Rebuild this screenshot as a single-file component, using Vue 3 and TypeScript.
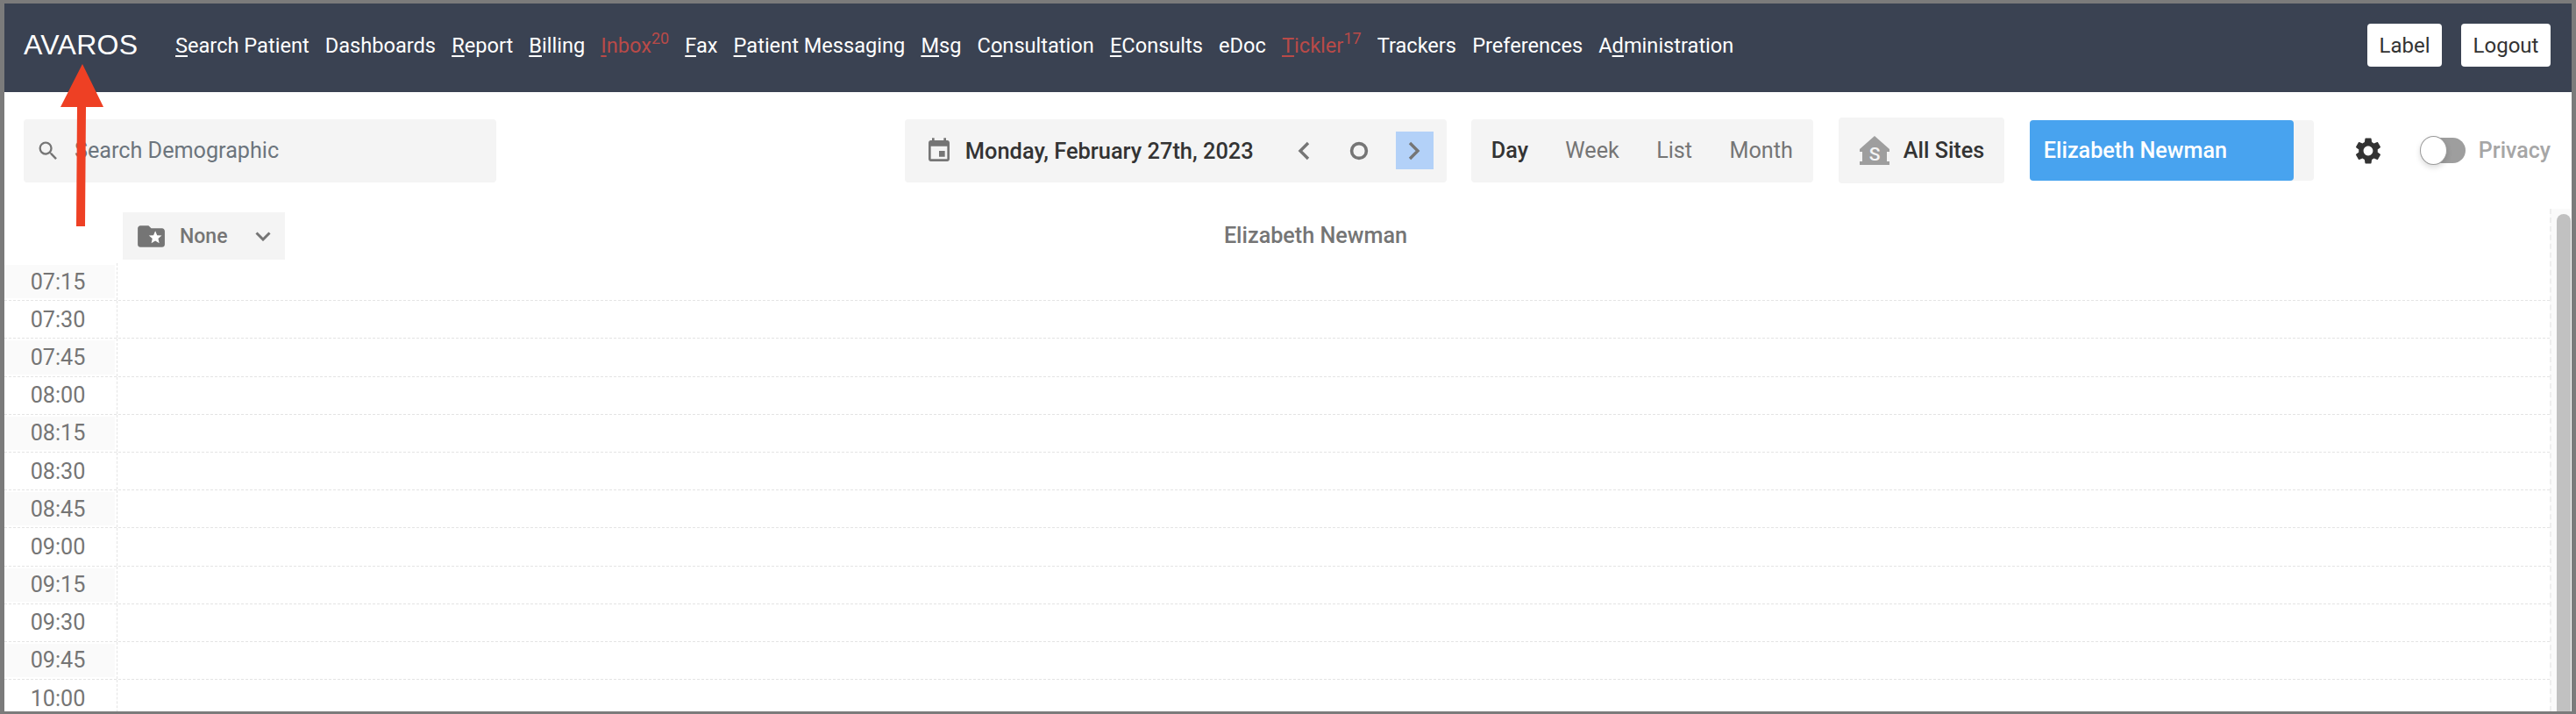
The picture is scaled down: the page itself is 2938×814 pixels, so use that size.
<script setup lang="ts">
interface NavItem {
  pre?: string
  key?: string
  post?: string
  alert?: boolean
  sup?: string
}

const navItems: NavItem[] = [
  { key: 'S', post: 'earch Patient' },
  { post: 'Dashboards' },
  { key: 'R', post: 'eport' },
  { key: 'B', post: 'illing' },
  { key: 'I', post: 'nbox', alert: true, sup: '20' },
  { key: 'F', post: 'ax' },
  { key: 'P', post: 'atient Messaging' },
  { key: 'M', post: 'sg' },
  { pre: 'C', key: 'o', post: 'nsultation' },
  { key: 'E', post: 'Consults' },
  { post: 'eDoc' },
  { key: 'T', post: 'ickler', alert: true, sup: '17' },
  { post: 'Trackers' },
  { post: 'Preferences' },
  { pre: 'A', key: 'd', post: 'ministration' },
]

const views = ['Day', 'Week', 'List', 'Month']

const times = [
  '07:15', '07:30', '07:45', '08:00', '08:15', '08:30',
  '08:45', '09:00', '09:15', '09:30', '09:45', '10:00',
]
</script>

<template>
  <div class="frame">
    <header class="nav">
      <div class="logo">AVAROS</div>
      <nav class="links">
        <a v-for="item in navItems" :key="(item.pre ?? '') + (item.key ?? '') + item.post" class="link" :class="{ alert: item.alert }">{{ item.pre }}<u v-if="item.key">{{ item.key }}</u>{{ item.post }}<sup v-if="item.sup">{{ item.sup }}</sup></a>
      </nav>
      <div class="nav-actions">
        <button class="nav-btn label-btn">Label</button>
        <button class="nav-btn logout-btn">Logout</button>
      </div>
    </header>

    <section class="toolbar">
      <div class="group search">
        <svg class="search-icon" viewBox="0 0 24 24" width="28" height="28">
          <path fill="#757575" d="M15.5 14h-.79l-.28-.27A6.47 6.47 0 0 0 16 9.5 6.5 6.5 0 1 0 9.5 16c1.61 0 3.09-.59 4.23-1.57l.27.28v.79l5 4.99L20.49 19l-4.99-5zm-6 0C7.01 14 5 11.99 5 9.5S7.01 5 9.5 5 14 7.01 14 9.5 11.99 14 9.5 14z" />
        </svg>
        <span class="placeholder">Search Demographic</span>
      </div>

      <div class="group date">
        <svg viewBox="0 0 24 24" width="32" height="32">
          <path fill="#757575" d="M17 12h-5v5h5v-5zM16 1v2H8V1H6v2H5c-1.11 0-1.99.9-1.99 2L3 19c0 1.1.89 2 2 2h14c1.1 0 2-.9 2-2V5c0-1.1-.9-2-2-2h-1V1h-2zm3 18H5V8h14v11z" />
        </svg>
        <span class="date-text">Monday, February 27th, 2023</span>
        <div class="date-nav">
          <span class="date-btn">
            <svg viewBox="0 0 16 24" width="16" height="24"><path d="M13 3 4 12l9 9" fill="none" stroke="#757575" stroke-width="3.4" /></svg>
          </span>
          <span class="date-btn">
            <svg viewBox="0 0 22 22" width="22" height="22"><circle cx="11" cy="11" r="8.4" fill="none" stroke="#757575" stroke-width="3.6" /></svg>
          </span>
          <span class="date-btn active">
            <svg viewBox="0 0 16 24" width="16" height="24"><path d="m3 3 9 9-9 9" fill="none" stroke="#757575" stroke-width="3.4" /></svg>
          </span>
        </div>
      </div>

      <div class="group view">
        <span v-for="(v, i) in views" :key="v" class="view-item" :class="{ current: i === 0 }">{{ v }}</span>
      </div>

      <div class="group sites">
        <svg viewBox="0 0 34 33" width="34" height="33">
          <path fill="#9e9e9e" d="M17 0 34 15v3h-3v11h3v4H0v-4h3V18H0v-3z" />
          <text x="17" y="28" text-anchor="middle" class="site-s">S</text>
        </svg>
        <span class="sites-text">All Sites</span>
      </div>

      <div class="provider">
        <div class="provider-value">Elizabeth Newman</div>
      </div>

      <svg class="gear" viewBox="0 0 24 24" width="36" height="36">
        <path fill="#333" d="M19.14 12.94c.04-.3.06-.61.06-.94 0-.32-.02-.64-.07-.94l2.03-1.58c.18-.14.23-.41.12-.61l-1.92-3.32c-.12-.22-.37-.29-.59-.22l-2.39.96c-.5-.38-1.03-.7-1.62-.94l-.36-2.54c-.04-.24-.24-.41-.48-.41h-3.84c-.24 0-.43.17-.47.41l-.36 2.54c-.59.24-1.13.57-1.62.94l-2.39-.96c-.22-.08-.47 0-.59.22L2.74 8.87c-.12.21-.08.47.12.61l2.03 1.58c-.05.3-.09.63-.09.94s.02.64.07.94l-2.03 1.58c-.18.14-.23.41-.12.61l1.92 3.32c.12.22.37.29.59.22l2.39-.96c.5.38 1.03.7 1.62.94l.36 2.54c.05.24.24.41.48.41h3.84c.24 0 .44-.17.47-.41l.36-2.54c.59-.24 1.13-.56 1.62-.94l2.39.96c.22.08.47 0 .59-.22l1.92-3.32c.12-.22.07-.47-.12-.61l-2.01-1.58zM12 15.6c-1.98 0-3.6-1.62-3.6-3.6s1.62-3.6 3.6-3.6 3.6 1.62 3.6 3.6-1.62 3.6-3.6 3.6z" />
      </svg>

      <div class="toggle"><span class="knob"></span></div>
      <span class="privacy">Privacy</span>
    </section>

    <section class="calendar">
      <div class="grid">
        <div class="grid-head">
          <div class="schedule">
            <svg viewBox="0 0 24 24" width="37" height="37">
              <path fill="#757575" d="M20 6h-8l-2-2H4c-1.1 0-1.99.9-1.99 2L2 18c0 1.1.9 2 2 2h16c1.1 0 2-.9 2-2V8c0-1.1-.9-2-2-2z" />
              <path fill="#fff" d="M17.94 17 15 15.28 12.06 17l.78-3.33-2.59-2.24 3.41-.29L15 8l1.34 3.14 3.41.29-2.59 2.24z" />
            </svg>
            <span class="schedule-text">None</span>
            <svg class="schedule-caret" viewBox="0 0 18 11" width="18" height="11">
              <path d="m1.5 1.5 7.5 7.5 7.5-7.5" fill="none" stroke="#757575" stroke-width="3" />
            </svg>
          </div>
          <div class="column-title">Elizabeth Newman</div>
        </div>
        <div v-for="(t, i) in times" :key="t" class="row">
          <div class="time" :class="{ shaded: i % 2 === 0 }">{{ t }}</div>
          <div class="slot"></div>
        </div>
      </div>
      <div class="scroll-track"><div class="scroll-thumb"></div></div>
    </section>

    <svg class="annotation" viewBox="0 0 49 185" width="49" height="185">
      <path fill="#ee4024" d="M25 0 49 49H29L28 185H18L19 49H0z" />
    </svg>
  </div>
</template>

<style scoped>
.frame {
  position: relative;
  box-sizing: border-box;
  width: 2938px;
  height: 814px;
  border-style: solid;
  border-color: #7b7b7b;
  border-width: 4px 5px 3px;
  background: #fff;
  overflow: hidden;
  display: flex;
  flex-direction: column;
  font-family: Roboto, "Liberation Sans", sans-serif;
  font-size: 25.2px;
  color: #333;
}

.nav {
  flex: none;
  height: 101px;
  box-sizing: border-box;
  padding: 0 24px 6px 22px;
  display: flex;
  align-items: center;
  background: #3a4252;
}

.logo {
  font-family: "Liberation Sans", Arial, sans-serif;
  font-size: 32px;
  letter-spacing: 0.3px;
  color: #fff;
  width: 173px;
  flex: none;
}

.links {
  display: flex;
  gap: 18.1px;
  flex: 1;
  font-size: 23.6px;
}

.link {
  color: #fff;
  white-space: nowrap;
  line-height: 30px;
}

.link u {
  text-underline-offset: 3px;
  text-decoration-thickness: 2px;
}

.link.alert {
  color: #b94a48;
}

.link sup {
  font-size: 18px;
  line-height: 0;
  vertical-align: 10px;
}

.nav-actions {
  display: flex;
  gap: 22px;
}

.nav-btn {
  height: 49px;
  border: 0;
  border-radius: 4px;
  background: #fff;
  color: #333;
  font: inherit;
  font-size: 24px;
  padding: 0;
}

.label-btn {
  width: 85px;
}

.logout-btn {
  width: 102px;
}

.toolbar {
  flex: none;
  height: 133px;
  box-sizing: border-box;
  padding: 0 24px 0 22px;
  display: flex;
  align-items: center;
}

.group {
  display: flex;
  align-items: center;
  height: 72px;
  box-sizing: border-box;
  background: #f4f4f4;
  border-radius: 4px;
  flex: none;
}

.search {
  width: 539px;
  padding-left: 14px;
}

.search-icon {
  flex: none;
}

.placeholder {
  margin-left: 16px;
  color: #6c757d;
  white-space: nowrap;
}

.date {
  width: 618px;
  margin-left: auto;
  padding-left: 23px;
}

.date-text {
  margin-left: 14px;
  font-size: 25.4px;
  font-weight: 500;
  white-space: nowrap;
}

.date-nav {
  display: flex;
  gap: 20px;
  margin-left: auto;
  margin-right: 15px;
}

.date-btn {
  width: 43px;
  height: 43px;
  display: flex;
  align-items: center;
  justify-content: center;
}

.date-btn.active {
  background: #b3d1f8;
}

.view {
  width: 390px;
  margin-left: 28px;
  padding: 0 23px;
  justify-content: space-between;
}

.view-item {
  color: #757575;
}

.view-item.current {
  color: #333;
  font-weight: 500;
}

.sites {
  width: 189px;
  height: 75px;
  margin-left: 29px;
  padding-left: 24px;
  gap: 16px;
}

.site-s {
  font-family: Roboto, sans-serif;
  font-size: 21px;
  font-weight: 500;
  fill: #f4f4f4;
}

.sites-text {
  font-weight: 500;
  white-space: nowrap;
}

.provider {
  flex: none;
  width: 324px;
  height: 69px;
  margin-left: 29px;
  background: #f4f4f4;
  border-radius: 4px;
}

.provider-value {
  width: 301px;
  height: 100%;
  box-sizing: border-box;
  padding-left: 16px;
  display: flex;
  align-items: center;
  background: #48a3ef;
  color: #fff;
  border-radius: 4px;
  font-weight: 500;
}

.gear {
  flex: none;
  margin-left: 44px;
}

.toggle {
  position: relative;
  flex: none;
  width: 44px;
  height: 29px;
  margin-left: 49px;
  background: #9e9e9e;
  border-radius: 0 15px 15px 0;
}

.knob {
  position: absolute;
  left: -8px;
  top: -2px;
  width: 31px;
  height: 33px;
  box-sizing: border-box;
  border: 1px solid #9a9a9a;
  border-radius: 50%;
  background: #fff;
  box-shadow: 0 3px 6px rgba(0, 0, 0, 0.14);
}

.privacy {
  margin-left: 15px;
  font-size: 25px;
  color: #a6a6a6;
  font-weight: 500;
  white-space: nowrap;
}

.calendar {
  flex: 1;
  min-height: 0;
  display: flex;
}

.grid {
  flex: 1;
  min-width: 0;
  overflow: hidden;
}

.grid-head {
  height: 62px;
  box-sizing: border-box;
  padding: 4px 0 0 135px;
  display: flex;
  align-items: flex-start;
}

.schedule {
  flex: none;
  width: 185px;
  height: 54px;
  box-sizing: border-box;
  padding-left: 14px;
  display: flex;
  align-items: center;
  background: #f4f4f4;
  color: #757575;
  font-weight: 500;
  font-size: 23px;
}

.schedule-text {
  margin-left: 14px;
}

.schedule-caret {
  margin-left: 31px;
}

.column-title {
  flex: 1;
  height: 54px;
  line-height: 54px;
  padding-right: 232px;
  text-align: center;
  color: #757575;
  font-weight: 500;
}

.row {
  height: 43.2px;
  box-sizing: border-box;
  display: flex;
  border-bottom: 1px dashed #e4e4e4;
}

.time {
  flex: none;
  width: 126px;
  margin: 2px 2px 2px 0;
  padding-right: 4px;
  box-sizing: border-box;
  display: flex;
  align-items: center;
  justify-content: center;
  color: #757575;
}

.time.shaded {
  background: #fafafa;
}

.slot {
  flex: 1;
  border-left: 1px dashed #e4e4e4;
}

.scroll-track {
  flex: none;
  width: 25px;
  box-sizing: border-box;
  padding: 6px 1px 0 6px;
  border-left: 2px dashed #eee;
  background: #fafafa;
}

.scroll-thumb {
  width: 16px;
  height: 600px;
  background: #c1c1c1;
  border-radius: 8px 8px 0 0;
}

.annotation {
  position: absolute;
  left: 64px;
  top: 69px;
}
</style>

<style>
html,
body {
  margin: 0;
  overflow: hidden;
  background: #7b7b7b;
}
</style>
